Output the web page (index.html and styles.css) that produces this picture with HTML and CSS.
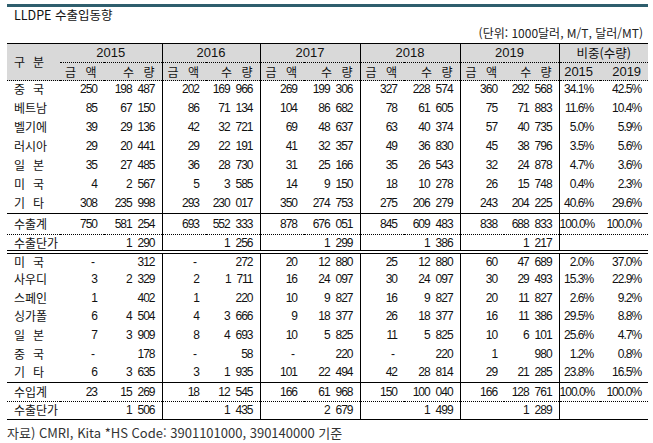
FILE: index.html
```html
<!DOCTYPE html>
<html lang="ko">
<head>
<meta charset="utf-8">
<title>LLDPE 수출입동향</title>
<link rel="stylesheet" href="styles.css">
</head>
<body>
<div class="page">
  <div class="bar"></div>
  <div class="title">LLDPE 수출입동향</div>
  <div class="unit">(단위: 1000달러, M/T, 달러/MT)</div>
  <table class="tbl">
    <colgroup>
      <col class="c-lab"><col class="c-a"><col class="c-q15">
      <col class="c-a"><col class="c-q16">
      <col class="c-a"><col class="c-q">
      <col class="c-a"><col class="c-q">
      <col class="c-a"><col class="c-q19">
      <col class="c-p1"><col class="c-p2">
    </colgroup>
    <thead>
      <tr class="h1">
        <th class="gubun" rowspan="2"><span class="dist">구<span>분</span></span></th>
        <th class="yr" colspan="2">2015</th>
        <th class="yr gl" colspan="2">2016</th>
        <th class="yr gl" colspan="2">2017</th>
        <th class="yr gl" colspan="2">2018</th>
        <th class="yr gl" colspan="2">2019</th>
        <th class="yr gl ko" colspan="2">비중(수량)</th>
      </tr>
      <tr class="h2">
        <th class="ha">금 액</th><th class="hq">수 량</th>
        <th class="ha gl">금 액</th><th class="hq">수 량</th>
        <th class="ha gl">금 액</th><th class="hq">수 량</th>
        <th class="ha gl">금 액</th><th class="hq">수 량</th>
        <th class="ha gl">금 액</th><th class="hq">수 량</th>
        <th class="hy gl">2015</th><th class="hy">2019</th>
      </tr>
    </thead>
    <tbody>
      <tr class="d"><td class="lab"><span class="dist">중<span>국</span></span></td><td>250</td><td>198 487</td><td class="gl">202</td><td>169 966</td><td class="gl">269</td><td>199 306</td><td class="gl">327</td><td>228 574</td><td class="gl">360</td><td>292 568</td><td class="gl">34.1%</td><td>42.5%</td></tr>
      <tr class="d"><td class="lab">베트남</td><td>85</td><td>67 150</td><td class="gl">86</td><td>71 134</td><td class="gl">104</td><td>86 682</td><td class="gl">78</td><td>61 605</td><td class="gl">75</td><td>71 883</td><td class="gl">11.6%</td><td>10.4%</td></tr>
      <tr class="d"><td class="lab">벨기에</td><td>39</td><td>29 136</td><td class="gl">42</td><td>32 721</td><td class="gl">69</td><td>48 637</td><td class="gl">63</td><td>40 374</td><td class="gl">57</td><td>40 735</td><td class="gl">5.0%</td><td>5.9%</td></tr>
      <tr class="d"><td class="lab">러시아</td><td>29</td><td>20 441</td><td class="gl">29</td><td>22 191</td><td class="gl">41</td><td>32 357</td><td class="gl">49</td><td>36 830</td><td class="gl">45</td><td>38 796</td><td class="gl">3.5%</td><td>5.6%</td></tr>
      <tr class="d"><td class="lab"><span class="dist">일<span>본</span></span></td><td>35</td><td>27 485</td><td class="gl">36</td><td>28 730</td><td class="gl">31</td><td>25 166</td><td class="gl">35</td><td>26 543</td><td class="gl">32</td><td>24 878</td><td class="gl">4.7%</td><td>3.6%</td></tr>
      <tr class="d"><td class="lab"><span class="dist">미<span>국</span></span></td><td>4</td><td>2 567</td><td class="gl">5</td><td>3 585</td><td class="gl">14</td><td>9 150</td><td class="gl">18</td><td>10 278</td><td class="gl">26</td><td>15 748</td><td class="gl">0.4%</td><td>2.3%</td></tr>
      <tr class="d"><td class="lab"><span class="dist">기<span>타</span></span></td><td>308</td><td>235 998</td><td class="gl">293</td><td>230 017</td><td class="gl">350</td><td>274 753</td><td class="gl">275</td><td>206 279</td><td class="gl">243</td><td>204 225</td><td class="gl">40.6%</td><td>29.6%</td></tr>
      <tr class="sum1"><td class="lab">수출계</td><td>750</td><td>581 254</td><td class="gl">693</td><td>552 333</td><td class="gl">878</td><td>676 051</td><td class="gl">845</td><td>609 483</td><td class="gl">838</td><td>688 833</td><td class="gl">100.0%</td><td>100.0%</td></tr>
      <tr class="price1"><td class="lab">수출단가</td><td></td><td>1 290</td><td class="gl"></td><td>1 256</td><td class="gl"></td><td>1 299</td><td class="gl"></td><td>1 386</td><td class="gl"></td><td>1 217</td><td class="gl"></td><td></td></tr>
      <tr class="d i"><td class="lab"><span class="dist">미<span>국</span></span></td><td class="dash">-</td><td>312</td><td class="gl dash">-</td><td>272</td><td class="gl">20</td><td>12 880</td><td class="gl">25</td><td>12 880</td><td class="gl">60</td><td>47 689</td><td class="gl">2.0%</td><td>37.0%</td></tr>
      <tr class="d i2"><td class="lab">사우디</td><td>3</td><td>2 329</td><td class="gl">2</td><td>1 711</td><td class="gl">16</td><td>24 097</td><td class="gl">30</td><td>24 097</td><td class="gl">30</td><td>29 493</td><td class="gl">15.3%</td><td>22.9%</td></tr>
      <tr class="d i"><td class="lab">스페인</td><td>1</td><td>402</td><td class="gl">1</td><td>220</td><td class="gl">10</td><td>9 827</td><td class="gl">16</td><td>9 827</td><td class="gl">20</td><td>11 827</td><td class="gl">2.6%</td><td>9.2%</td></tr>
      <tr class="d i2"><td class="lab">싱가폴</td><td>6</td><td>4 504</td><td class="gl">4</td><td>3 666</td><td class="gl">9</td><td>18 377</td><td class="gl">26</td><td>18 377</td><td class="gl">16</td><td>11 386</td><td class="gl">29.5%</td><td>8.8%</td></tr>
      <tr class="d i"><td class="lab"><span class="dist">일<span>본</span></span></td><td>7</td><td>3 909</td><td class="gl">8</td><td>4 693</td><td class="gl">10</td><td>5 825</td><td class="gl">11</td><td>5 825</td><td class="gl">10</td><td>6 101</td><td class="gl">25.6%</td><td>4.7%</td></tr>
      <tr class="d i"><td class="lab"><span class="dist">중<span>국</span></span></td><td class="dash">-</td><td>178</td><td class="gl dash">-</td><td>58</td><td class="gl dash">-</td><td>220</td><td class="gl dash">-</td><td>220</td><td class="gl">1</td><td>980</td><td class="gl">1.2%</td><td>0.8%</td></tr>
      <tr class="d i2"><td class="lab"><span class="dist">기<span>타</span></span></td><td>6</td><td>3 635</td><td class="gl">3</td><td>1 935</td><td class="gl">101</td><td>22 494</td><td class="gl">42</td><td>28 814</td><td class="gl">29</td><td>21 285</td><td class="gl">23.8%</td><td>16.5%</td></tr>
      <tr class="sum2"><td class="lab">수입계</td><td>23</td><td>15 269</td><td class="gl">18</td><td>12 545</td><td class="gl">166</td><td>61 968</td><td class="gl">150</td><td>100 040</td><td class="gl">166</td><td>128 761</td><td class="gl">100.0%</td><td>100.0%</td></tr>
      <tr class="price2"><td class="lab">수출단가</td><td></td><td>1 506</td><td class="gl"></td><td>1 435</td><td class="gl"></td><td>2 679</td><td class="gl"></td><td>1 499</td><td class="gl"></td><td>1 289</td><td class="gl"></td><td></td></tr>
    </tbody>
  </table>
  <div class="note">자료) CMRI, Kita *HS Code: 3901101000, 390140000 기준</div>
</div>
</body>
</html>
```

FILE: styles.css
```css
html, body {
  margin: 0;
  padding: 0;
  background: #ffffff;
}

body {
  font-family: "Liberation Sans", "Noto Sans CJK KR", sans-serif;
  color: #111;
}

.page {
  width: 641px;
  padding: 4px 0 0 7px;
}

.bar {
  height: 3px;
  background: #2e5e6d;
}

.title {
  height: 16px;
  line-height: 16px;
  padding-left: 7px;
  font-family: "Noto Sans CJK KR", sans-serif;
  font-size: 12.5px;
  color: #111;
}

.unit {
  height: 20px;
  line-height: 20px;
  padding-right: 5px;
  text-align: right;
  font-family: "Noto Sans CJK KR", sans-serif;
  font-size: 12px;
  color: #222;
}

.tbl {
  width: 641px;
  table-layout: fixed;
  border-collapse: collapse;
  border-top: 1px solid #000;
}

.c-lab { width: 53px; }
.c-a { width: 44px; }
.c-q15 { width: 58px; }
.c-q16 { width: 54px; }
.c-q { width: 56px; }
.c-q19 { width: 55px; }
.c-p1 { width: 41px; }
.c-p2 { width: 48px; }

.tbl th, .tbl td {
  padding: 0 7px 0 0;
  white-space: nowrap;
  overflow: visible;
  line-height: 14px;
}

.tbl thead th {
  background: #d9d9d9;
  font-weight: normal;
  font-family: "Noto Sans CJK KR", sans-serif;
  font-size: 12px;
  color: #111;
}

.tbl .h1 { height: 19px; }
.tbl .h2 { height: 18px; }

.tbl .yr {
  text-align: center;
  padding: 0;
  border-bottom: 1px dotted #000;
  font-family: "Liberation Sans", sans-serif;
  font-size: 13px;
}

.tbl .gubun {
  text-align: left;
  padding-left: 7px;
  border-bottom: 1px dotted #000;
}

.tbl .h2 th {
  border-bottom: 1px dotted #000;
}

.tbl .ha {
  text-align: left;
  padding-left: 5px;
  word-spacing: 6px;
}

.tbl .hq {
  text-align: right;
  padding-right: 7px;
  word-spacing: 6px;
}

.tbl .hy {
  text-align: right;
  padding-right: 7px;
  font-family: "Liberation Sans", sans-serif;
  font-size: 13px;
}

.tbl .ko {
  font-family: "Noto Sans CJK KR", sans-serif;
  font-size: 12.5px;
}

.tbl td {
  text-align: right;
  font-size: 12px;
  letter-spacing: -1px;
  word-spacing: 3.5px;
}

.tbl td.lab {
  text-align: left;
  padding-left: 7px;
  font-family: "Noto Sans CJK KR", sans-serif;
  font-size: 12px;
  letter-spacing: 0;
  word-spacing: 0;
}

.dist {
  display: inline-flex;
  justify-content: space-between;
  width: 30px;
}

.tbl .gl { border-left: 1px solid #000; }

.tbl td.dash { padding-right: 10px; }

.tbl .d { height: 19px; }
.tbl .i { height: 19px; }
.tbl .i2 { height: 18px; }

.tbl .d td { padding-bottom: 2px; }

.tbl .sum1 td { height: 20px; border-top: 1px solid #000; }
.tbl .price1 td { height: 15px; border-top: 1px dotted #000; border-bottom: 4px double #000; }

.tbl .sum2 td { height: 18px; border-top: 1px solid #000; }
.tbl .price2 td { height: 17px; border-top: 1px dotted #000; border-bottom: 1px solid #000; }

.note {
  margin-top: 4px;
  height: 17px;
  line-height: 17px;
  font-family: "Noto Sans CJK KR", sans-serif;
  font-size: 13px;
  color: #333;
}
```
